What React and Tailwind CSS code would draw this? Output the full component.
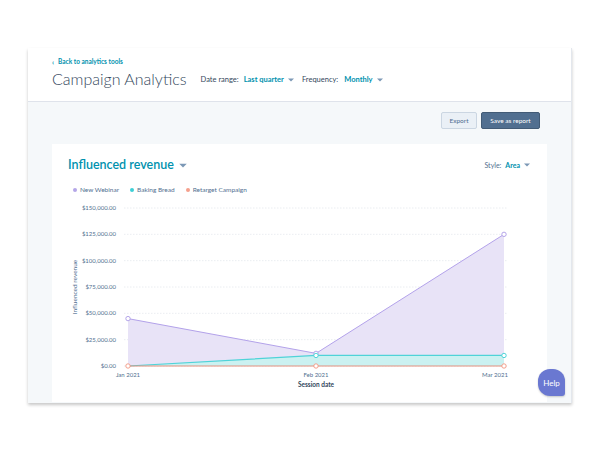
import React from "react";

const Y0 = 366;
const yv = (v) => Y0 - (v / 150000) * 158;
const X = [128, 316, 504];

function Chart() {
  const ticks = [150000, 125000, 100000, 75000, 50000, 25000, 0];
  const fmt = (v) => "$" + v.toLocaleString("en-US") + ".00";
  const purple = [45000, 12000, 125000];
  const teal = [0, 10000, 10000];
  const pts = (arr) => arr.map((v, i) => `${X[i]},${yv(v)}`).join(" ");
  const area = (arr) => `${X[0]},${Y0} ${pts(arr)} ${X[2]},${Y0}`;
  return (
    <svg width="496" height="200" viewBox="52 198 496 200" className="block">
      {ticks.map((t) => (
        <g key={t}>
          <line x1="124" x2="508" y1={yv(t)} y2={yv(t)} stroke="#e5e8ee" strokeWidth="0.8" strokeDasharray="1.5 1.5" />
          <text x="116" y={yv(t) + 2} textAnchor="end" fontSize="6" fill="#516f90" fontFamily="Lato, sans-serif">{fmt(t)}</text>
        </g>
      ))}
      <text transform="translate(77 287) rotate(-90)" textAnchor="middle" fontSize="6.5" fill="#516f90" fontFamily="Lato, sans-serif">Influenced revenue</text>
      <polygon points={area(purple)} fill="#e8e3f7" />
      <polyline points={pts(purple)} fill="none" stroke="#b3a2ea" strokeWidth="1" />
      <polygon points={area(teal)} fill="#cbf1f1" />
      <polyline points={pts(teal)} fill="none" stroke="#4fd3d8" strokeWidth="1.2" />
      <line x1={X[0]} x2={X[2]} y1={Y0} y2={Y0} stroke="#e3907f" strokeWidth="1" />
      {purple.map((v, i) => (
        <circle key={"p" + i} cx={X[i]} cy={yv(v)} r="2.2" fill="#fff" stroke="#ad9ce6" strokeWidth="0.9" />
      ))}
      {teal.slice(1).map((v, i) => (
        <circle key={"t" + i} cx={X[i + 1]} cy={yv(v)} r="2.2" fill="#fff" stroke="#3fcfd6" strokeWidth="0.9" />
      ))}
      {X.map((x, i) => (
        <circle key={"r" + i} cx={x} cy={Y0} r="2.2" fill="#fff" stroke="#f2957f" strokeWidth="0.9" />
      ))}
      <text x="128" y="377" textAnchor="middle" fontSize="6" fill="#516f90" fontFamily="Lato, sans-serif">Jan 2021</text>
      <text x="316" y="377" textAnchor="middle" fontSize="6" fill="#516f90" fontFamily="Lato, sans-serif">Feb 2021</text>
      <text x="508" y="377" textAnchor="end" fontSize="6" fill="#516f90" fontFamily="Lato, sans-serif">Mar 2021</text>
      <text x="316" y="387" textAnchor="middle" fontSize="6.5" fontWeight="700" fill="#33475b" fontFamily="Lato, sans-serif">Session date</text>
    </svg>
  );
}

const Caret = ({ className = "" }) => (
  <svg width="6" height="4" viewBox="0 0 6 4" className={className}>
    <path d="M0 0.5 L6 0.5 L3 3.5 Z" fill="currentColor" />
  </svg>
);

export default function App() {
  return (
    <div className="w-[600px] h-[450px] bg-white pt-[48px] px-[28px]" style={{ fontFamily: "Lato, 'Noto Sans', sans-serif" }}>
      <div className="relative h-[355px] bg-[#f5f8fa] border-r border-[#e3e7ed] shadow-[0_2px_3px_rgba(0,0,0,0.22)]">
        <div className="h-[54px] bg-white border-b border-[#dfe3eb] pl-[24px] pt-[9px]">
          <div className="flex items-center gap-[4px] text-[6.5px] font-bold text-[#0091ae] leading-[10px]">
            <span className="text-[7px]">‹</span>
            <span>Back to analytics tools</span>
          </div>
          <div className="flex items-center mt-[1px]">
            <div className="text-[16px] font-light text-[#33475b] leading-[22px]">Campaign Analytics</div>
            <div className="flex items-center ml-[14px] text-[7.5px] mt-[2px]">
              <span className="text-[#33475b]">Date range:</span>
              <span className="ml-[5px] font-bold text-[#0091ae]">Last quarter</span>
              <Caret className="ml-[4px] text-[#7c98b6]" />
              <span className="ml-[8px] text-[#33475b]">Frequency:</span>
              <span className="ml-[6px] font-bold text-[#0091ae]">Monthly</span>
              <Caret className="ml-[4px] text-[#7c98b6]" />
            </div>
          </div>
        </div>
        <div className="px-[24px] pt-[10px]">
          <div className="flex justify-end gap-[4px] pr-[7px]">
            <button className="h-[17px] w-[36px] bg-[#eaf0f6] border border-[#cbd6e2] rounded-[2px] text-[6.5px] text-[#506e91]">Export</button>
            <button className="h-[17px] w-[59px] bg-[#516f90] border border-[#425b76] rounded-[2px] text-[6.5px] text-white">Save as report</button>
          </div>
          <div className="mt-[15px] h-[258px] bg-white overflow-hidden">
            <div className="flex items-center justify-between pt-[12px] pl-[16px] pr-[17px]">
              <div className="flex items-center">
                <span className="text-[12.5px] font-semibold text-[#0091ae] leading-[18px]">Influenced revenue</span>
                <Caret className="ml-[5px] w-[8px] h-[5px] text-[#7c98b6]" />
              </div>
              <div className="flex items-center text-[7px]">
                <span className="text-[#516f90]">Style:</span>
                <span className="ml-[4px] font-bold text-[#0091ae]">Area</span>
                <Caret className="ml-[4px] text-[#7c98b6]" />
              </div>
            </div>
            <div className="flex items-center mt-[11px] pl-[21px] text-[6.5px] text-[#516f90] leading-[10px]">
              <span className="w-[4px] h-[4px] rounded-full bg-[#b4a6e8]" />
              <span className="ml-[3px]">New Webinar</span>
              <span className="ml-[11px] w-[4px] h-[4px] rounded-full bg-[#3ecfd6]" />
              <span className="ml-[3px]">Baking Bread</span>
              <span className="ml-[11px] w-[4px] h-[4px] rounded-full bg-[#f5a08d]" />
              <span className="ml-[3px]">Retarget Campaign</span>
            </div>
            <div className="mt-[3px]">
              <Chart />
            </div>
          </div>
        </div>
        <div className="absolute left-[510px] top-[321px] w-[27px] h-[27px] bg-[#6a78d1] rounded-tl-[12px] rounded-tr-[12px] rounded-bl-[12px] rounded-br-[3px] flex items-center justify-center text-white text-[8px] shadow-[0_1px_2px_rgba(0,0,0,0.2)]">Help</div>
      </div>
    </div>
  );
}
